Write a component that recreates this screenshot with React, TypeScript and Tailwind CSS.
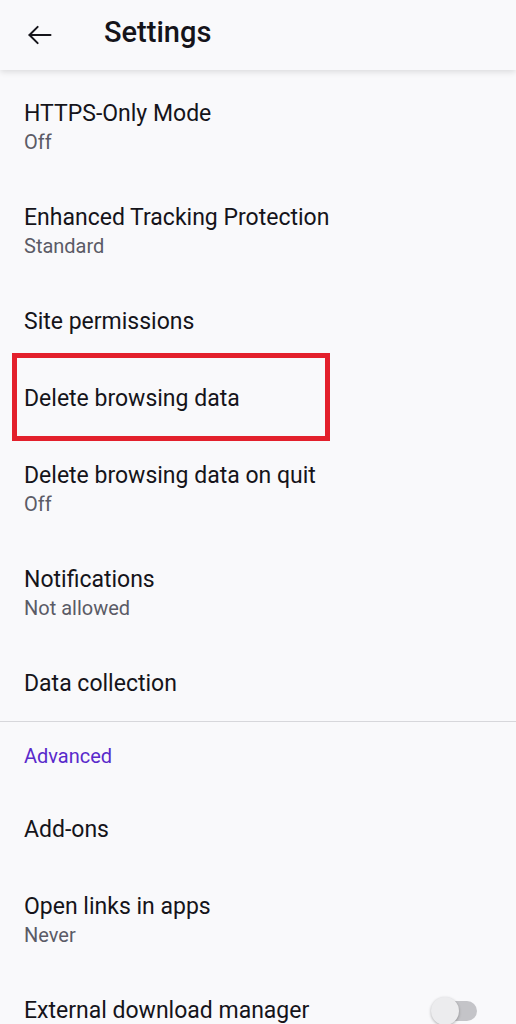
import React from "react";

const font = { fontFamily: "Roboto, 'Noto Sans', sans-serif" };

function Item({ title, sub }: { title: string; sub?: string }) {
  if (sub) {
    return (
      <div className="flex flex-col px-6 pb-[22px] pt-[26px]">
        <div className="text-[23px] leading-[28px] text-[#15141a]">{title}</div>
        <div className="text-[20px] leading-[28px] text-[#5b5b66]">{sub}</div>
      </div>
    );
  }
  return (
    <div className="flex h-[77px] items-center px-6 pt-[3px]">
      <div className="text-[23px] leading-[28px] text-[#15141a]">{title}</div>
    </div>
  );
}

export default function App() {
  return (
    <div className="min-h-[1024px] w-[516px] overflow-hidden bg-[#f9f9fb]" style={font}>
      <header className="relative z-10 flex h-[70px] items-center bg-[#f9f9fb] shadow-[0_2px_6px_rgba(0,0,0,0.12)]">
        <div className="flex w-[104px] items-center pl-[26px]">
          <svg width="28" height="28" viewBox="0 0 24 24" fill="none" stroke="#15141a" strokeWidth="1.7" strokeLinecap="round" strokeLinejoin="round">
            <path d="M21 12H3" />
            <path d="M10 5l-7 7 7 7" />
          </svg>
        </div>
        <h1 className="pb-[4px] text-[29px] font-medium text-[#15141a]">Settings</h1>
      </header>
      <div className="pt-[4px]">
        <Item title="HTTPS-Only Mode" sub="Off" />
        <Item title="Enhanced Tracking Protection" sub="Standard" />
        <Item title="Site permissions" />
        <div className="relative">
          <Item title="Delete browsing data" />
          <div className="pointer-events-none absolute left-[12px] top-[-6px] h-[88px] w-[318px] border-[5px] border-[#e3202c]" />
        </div>
        <Item title="Delete browsing data on quit" sub="Off" />
        <Item title="Notifications" sub="Not allowed" />
        <Item title="Data collection" />
        <div className="h-px bg-[#d7d7db]" />
        <div className="flex h-[68px] items-center px-6">
          <div className="text-[20px] text-[#592acb]">Advanced</div>
        </div>
        <Item title="Add-ons" />
        <Item title="Open links in apps" sub="Never" />
        <div className="flex h-[77px] items-center justify-between px-6 pt-[3px]">
          <div className="text-[23px] leading-[28px] text-[#15141a]">External download manager</div>
          <div className="relative mr-[15px] h-[20px] w-[36px] rounded-full bg-[#c4c4c8]">
            <div className="absolute left-[-10px] top-[-4px] h-[28px] w-[28px] rounded-full bg-[#ececee] shadow-[0_1px_3px_rgba(0,0,0,0.3)]" />
          </div>
        </div>
      </div>
    </div>
  );
}
